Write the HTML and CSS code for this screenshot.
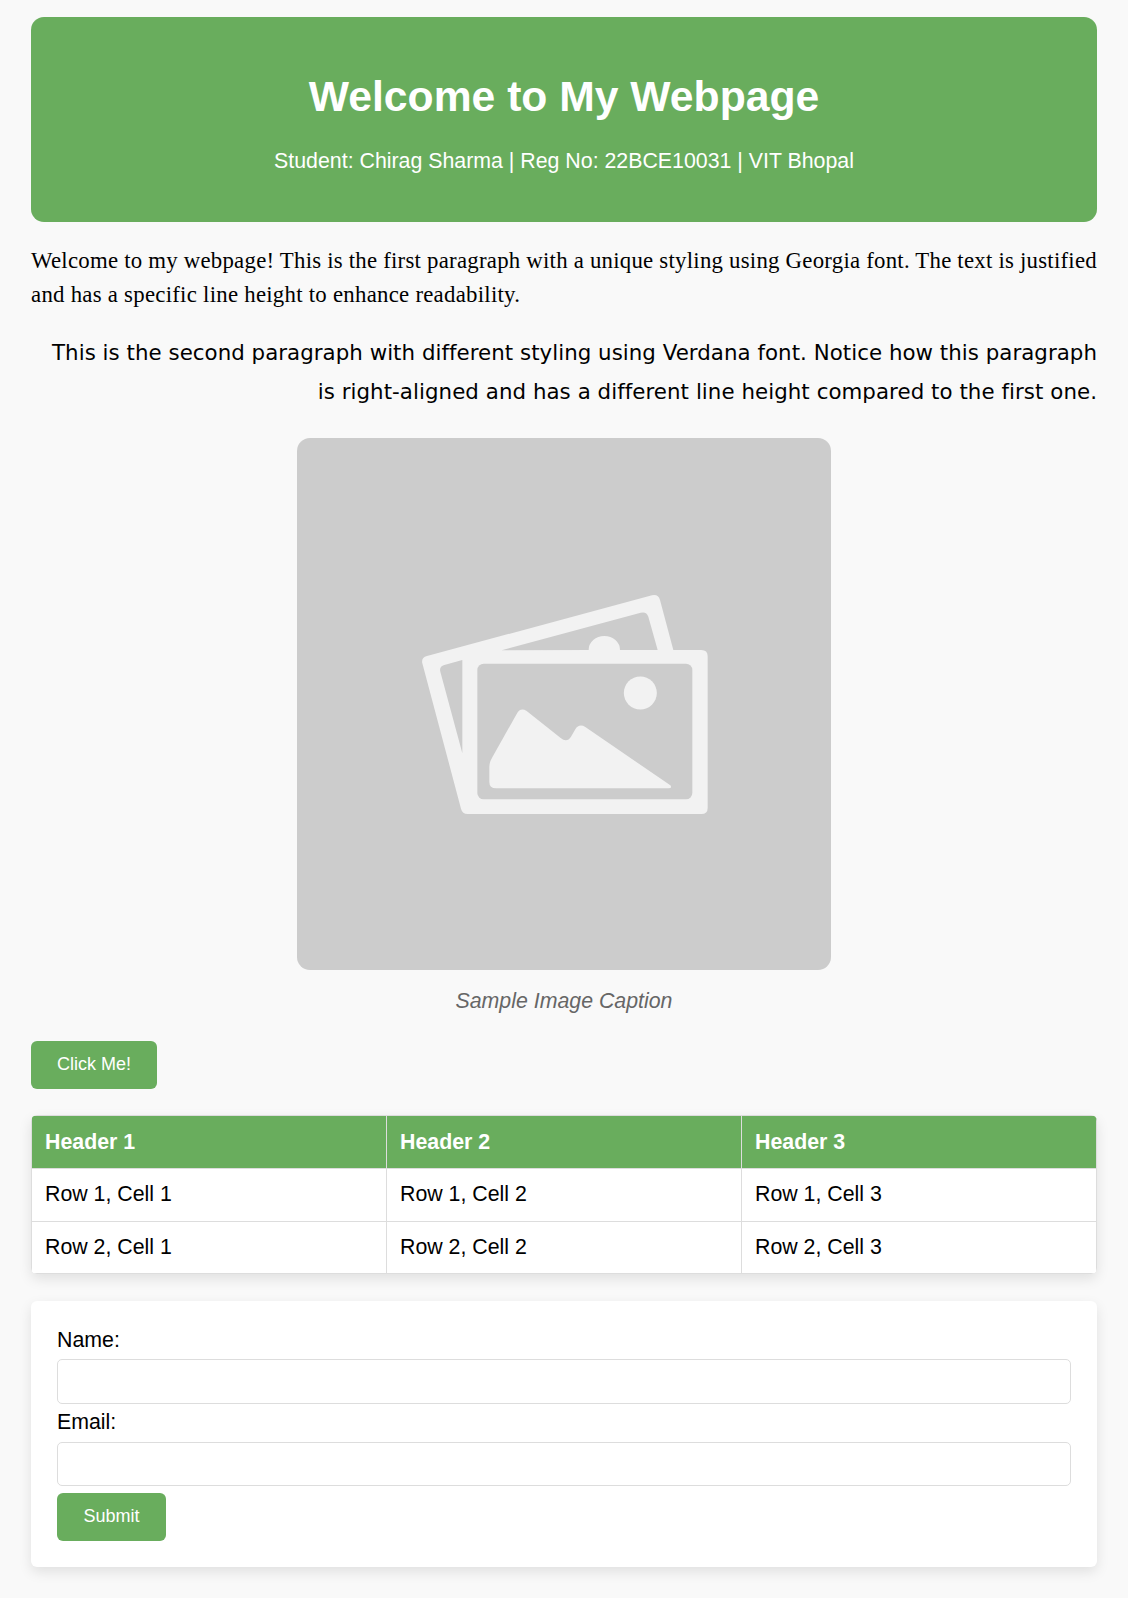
FILE: index.html
```html
<!DOCTYPE html>
<html lang="en">
<head>
<meta charset="utf-8">
<title>My Webpage</title>
<link rel="stylesheet" href="styles.css">
</head>
<body>
<header class="banner">
  <h1>Welcome to My Webpage</h1>
  <p>Student: Chirag Sharma | Reg No: 22BCE10031 | VIT Bhopal</p>
</header>
<p class="intro">Welcome to my webpage! This is the first paragraph with a unique styling using Georgia font. The text is justified <span class="intro-end">and has a specific line height to enhance readability.</span></p>
<p class="second">This is the second paragraph with different styling using Verdana font. Notice how this paragraph <span class="second-end">is right-aligned and has a different line height compared to the first one.</span></p>
<figure class="figure">
  <svg class="picture" viewBox="0 0 534 532" role="img" aria-label="Sample Image">
    <rect width="534" height="532" fill="#ccc"/>
    <g transform="translate(103 142) scale(.33333)">
      <path fill="#f2f2f2" d="M81 228L756 46Q775 42 780 60L820 210H904Q923 210 923 229V684Q923 702 904 702H203Q187 702 183 686L67 250Q63 233 81 228Z"/>
      <path fill="#ccc" d="M305 211L722 98Q740 94 745 110L773 210H660A47 42 0 0 0 566 210ZM187 240V520L121 275Q117 260 133 255Z"/>
      <rect x="232" y="251" width="645" height="407" rx="19" fill="#ccc"/>
      <circle cx="721" cy="339" r="49.500" fill="#f2f2f2"/>
      <path fill="#f2f2f2" d="M268 560Q268 547 277 532L350 402Q361 381 380 393L482 474Q501 489 513 470L526 448Q537 430 556 441L811 616Q817 624 806 625H288Q268 625 268 606Z"/>
    </g>
  </svg>
  <figcaption>Sample Image Caption</figcaption>
</figure>
<button class="button" type="button">Click Me!</button>
<table class="table">
  <thead><tr><th>Header 1</th><th>Header 2</th><th>Header 3</th></tr></thead>
  <tbody>
    <tr><td>Row 1, Cell 1</td><td>Row 1, Cell 2</td><td>Row 1, Cell 3</td></tr>
    <tr><td>Row 2, Cell 1</td><td>Row 2, Cell 2</td><td>Row 2, Cell 3</td></tr>
  </tbody>
</table>
<form class="form">
  <label for="name">Name:</label>
  <input class="name" id="name" type="text">
  <label for="email">Email:</label>
  <input class="email" id="email" type="email">
  <button class="button" type="submit">Submit</button>
</form>
</body>
</html>
```
FILE: styles.css
```css
* { box-sizing: border-box; }

body {
  margin: 0;
  padding: 17px 31px 31px;
  background: #f9f9f9;
  color: #000;
  font: 21.33px/24px Arial, "Liberation Sans", sans-serif;
}

.banner {
  height: 205px;
  padding-top: 54px;
  border-radius: 13px;
  background: #69ad5d;
  color: #fff;
  text-align: center;
}

.banner h1 { margin: 0; font-size: 42.67px; line-height: 50px; }
.banner p { margin: 28px 0 0; }

.intro {
  margin: 22px 0 0;
  font: 22.8px/34px Georgia, "Liberation Serif", serif;
  letter-spacing: .26px;
  word-spacing: -1.5px;
  text-align: justify;
}

.intro-end { white-space: nowrap; word-spacing: 0; }

.second {
  margin: 21px 0 0;
  font: 21.33px/39px Verdana, "DejaVu Sans", sans-serif;
  letter-spacing: .04px;
  text-align: right;
}

.second-end { white-space: nowrap; letter-spacing: .06px; }

.figure { margin: 27px 0 0; text-align: center; }
.picture { display: block; width: 534px; height: 532px; margin: 0 auto; border-radius: 13px; }
.figure figcaption { margin-top: 19px; color: #666; font-style: italic; }

.button {
  display: block;
  height: 48px;
  padding: 0 26px 2px;
  border: 0;
  border-radius: 6px;
  background: #69ad5d;
  color: #fff;
  font: 18px/20px Arial, "Liberation Sans", sans-serif;
}

.figure + .button { margin-top: 28px; }

.table {
  width: 1066px;
  margin-top: 26px;
  border-collapse: collapse;
  border-radius: 6px;
  overflow: hidden;
  table-layout: fixed;
  background: #fff;
  box-shadow: 0 5px 13px rgba(0, 0, 0, .1);
}

.table th,
.table td { height: 53px; padding: 0 13px; border: 1px solid #ddd; text-align: left; }
.table td { padding-bottom: 2px; }
.table tr:last-child td { height: 52px; }
.table th { height: 53px; background: #69ad5d; color: #fff; }

.form {
  height: 266px;
  margin-top: 27px;
  padding: 27px 26px 0;
  border-radius: 6px;
  background: #fff;
  box-shadow: 0 5px 13px rgba(0, 0, 0, .1);
}

.form label { display: block; }
.form input { display: block; width: 100%; border: 1px solid #ddd; border-radius: 5px; }
.form .name { height: 45px; margin: 7px 0 6px; }
.form .email { height: 44px; margin: 8px 0 7px; }
.form .button { min-width: 109px; }
```
